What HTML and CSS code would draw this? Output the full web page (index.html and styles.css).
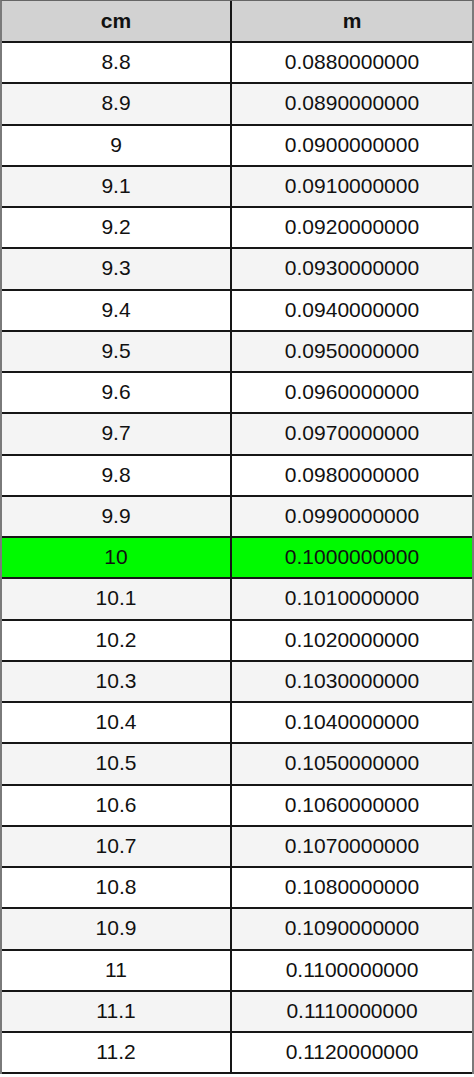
FILE: index.html
```html
<!DOCTYPE html>
<html>
<head>
<meta charset="utf-8">
<link rel="stylesheet" href="styles.css">
</head>
<body>
<div class="table">
  <div class="row head"><div class="cell a">cm</div><div class="cell b">m</div></div>
  <div class="row"><div class="cell a">8.8</div><div class="cell b">0.0880000000</div></div>
  <div class="row alt"><div class="cell a">8.9</div><div class="cell b">0.0890000000</div></div>
  <div class="row"><div class="cell a">9</div><div class="cell b">0.0900000000</div></div>
  <div class="row alt"><div class="cell a">9.1</div><div class="cell b">0.0910000000</div></div>
  <div class="row"><div class="cell a">9.2</div><div class="cell b">0.0920000000</div></div>
  <div class="row alt"><div class="cell a">9.3</div><div class="cell b">0.0930000000</div></div>
  <div class="row"><div class="cell a">9.4</div><div class="cell b">0.0940000000</div></div>
  <div class="row alt"><div class="cell a">9.5</div><div class="cell b">0.0950000000</div></div>
  <div class="row"><div class="cell a">9.6</div><div class="cell b">0.0960000000</div></div>
  <div class="row alt"><div class="cell a">9.7</div><div class="cell b">0.0970000000</div></div>
  <div class="row"><div class="cell a">9.8</div><div class="cell b">0.0980000000</div></div>
  <div class="row alt"><div class="cell a">9.9</div><div class="cell b">0.0990000000</div></div>
  <div class="row hl"><div class="cell a">10</div><div class="cell b">0.1000000000</div></div>
  <div class="row alt"><div class="cell a">10.1</div><div class="cell b">0.1010000000</div></div>
  <div class="row"><div class="cell a">10.2</div><div class="cell b">0.1020000000</div></div>
  <div class="row alt"><div class="cell a">10.3</div><div class="cell b">0.1030000000</div></div>
  <div class="row"><div class="cell a">10.4</div><div class="cell b">0.1040000000</div></div>
  <div class="row alt"><div class="cell a">10.5</div><div class="cell b">0.1050000000</div></div>
  <div class="row"><div class="cell a">10.6</div><div class="cell b">0.1060000000</div></div>
  <div class="row alt"><div class="cell a">10.7</div><div class="cell b">0.1070000000</div></div>
  <div class="row"><div class="cell a">10.8</div><div class="cell b">0.1080000000</div></div>
  <div class="row alt"><div class="cell a">10.9</div><div class="cell b">0.1090000000</div></div>
  <div class="row"><div class="cell a">11</div><div class="cell b">0.1100000000</div></div>
  <div class="row alt"><div class="cell a">11.1</div><div class="cell b">0.1110000000</div></div>
  <div class="row"><div class="cell a">11.2</div><div class="cell b">0.1120000000</div></div>
</div>
</body>
</html>
```
FILE: styles.css
```css
html, body {
  margin: 0;
  padding: 0;
  background: #fff;
}
.table {
  width: 474px;
  box-sizing: border-box;
  border-left: 2px solid #7a7a7a;
  border-right: 2px solid #7a7a7a;
  border-top: 1px solid #666;
  font-family: "Liberation Sans", Arial, sans-serif;
  color: #111;
}
.row {
  display: flex;
  height: 41.25px;
  box-sizing: border-box;
  border-bottom: 2px solid #161616;
  background: #fff;
}
.row.head {
  height: 42px;
  background: #d2d2d2;
  font-weight: bold;
}
.row.alt {
  background: #f4f4f4;
}
.row.hl {
  background: #00fa00;
}
.cell {
  display: flex;
  align-items: center;
  justify-content: center;
  font-size: 21px;
  padding-bottom: 1px;
}
.cell.a {
  width: 228px;
  border-right: 2px solid #161616;
}
.cell.b {
  flex: 1;
}
```
